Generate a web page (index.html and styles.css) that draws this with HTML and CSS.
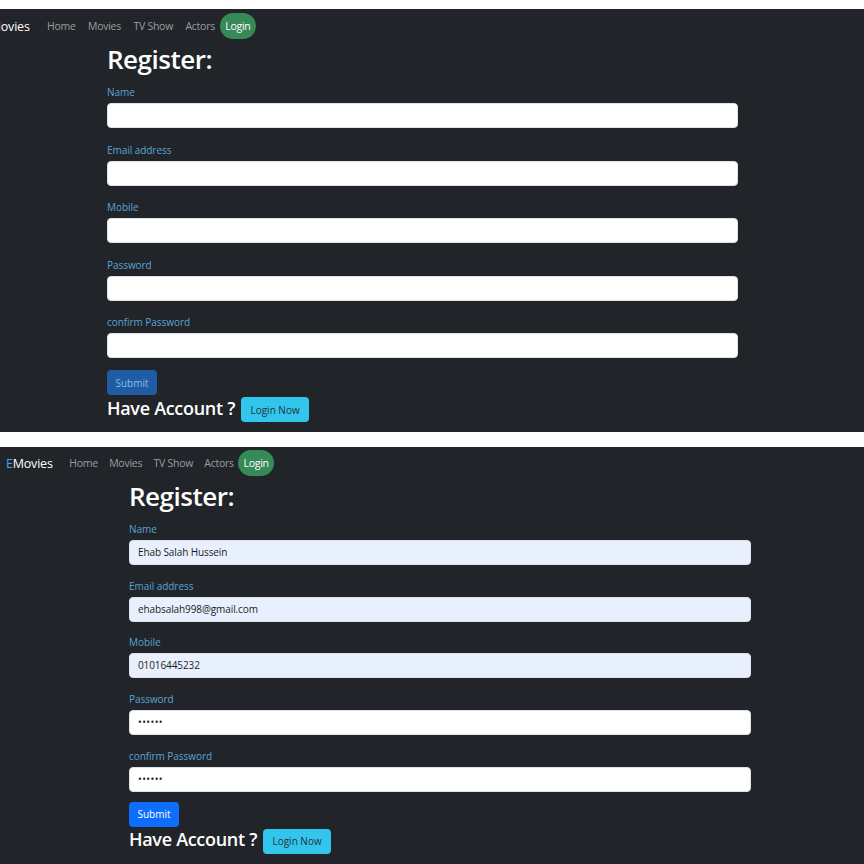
FILE: index.html
```html
<!DOCTYPE html>
<html lang="en">
<head>
<meta charset="utf-8">
<title>EMovies - Register</title>
<link rel="stylesheet" href="styles.css">
</head>
<body>
<section class="shot shot-a">
  <nav class="nav">
    <span class="brand"><span class="brand-e">E</span>Movies</span>
    <a class="nav-link">Home</a>
    <a class="nav-link">Movies</a>
    <a class="nav-link">TV Show</a>
    <a class="nav-link">Actors</a>
    <a class="nav-link nav-login">Login</a>
  </nav>
  <main class="form-wrap">
    <h1 class="title">Register:</h1>
    <div class="group"><label class="label">Name</label><div class="input"></div></div>
    <div class="group"><label class="label">Email address</label><div class="input"></div></div>
    <div class="group"><label class="label">Mobile</label><div class="input"></div></div>
    <div class="group"><label class="label">Password</label><div class="input"></div></div>
    <div class="group last"><label class="label">confirm Password</label><div class="input"></div></div>
    <button class="btn btn-submit disabled">Submit</button>
    <div class="have">
      <span class="have-text">Have Account ?</span>
      <button class="btn btn-login">Login Now</button>
    </div>
  </main>
</section>
<section class="shot shot-b">
  <nav class="nav">
    <span class="brand"><span class="brand-e">E</span>Movies</span>
    <a class="nav-link">Home</a>
    <a class="nav-link">Movies</a>
    <a class="nav-link">TV Show</a>
    <a class="nav-link">Actors</a>
    <a class="nav-link nav-login">Login</a>
  </nav>
  <main class="form-wrap">
    <h1 class="title">Register:</h1>
    <div class="group"><label class="label">Name</label><div class="input filled">Ehab Salah Hussein</div></div>
    <div class="group"><label class="label">Email address</label><div class="input filled">ehabsalah998@gmail.com</div></div>
    <div class="group"><label class="label">Mobile</label><div class="input filled">01016445232</div></div>
    <div class="group"><label class="label">Password</label><div class="input dots">&bull;&bull;&bull;&bull;&bull;&bull;</div></div>
    <div class="group last"><label class="label">confirm Password</label><div class="input dots">&bull;&bull;&bull;&bull;&bull;&bull;</div></div>
    <button class="btn btn-submit">Submit</button>
    <div class="have">
      <span class="have-text">Have Account ?</span>
      <button class="btn btn-login">Login Now</button>
    </div>
  </main>
</section>
</body>
</html>
```
FILE: styles.css
```css
html, body {
  margin: 0;
  padding: 0;
  background: #ffffff;
}
body {
  font-family: "Open Sans", "Noto Sans", "Liberation Sans", sans-serif;
  padding-top: 9px;
}
.shot {
  background: #212529;
  overflow: hidden;
  box-sizing: border-box;
}
.shot-a {
  height: 423px;
  margin-bottom: 15px;
}
.shot-b {
  height: 417px;
}
.nav {
  display: flex;
  align-items: center;
  height: 26px;
  padding-top: 4px;
  padding-left: 6px;
}
.shot-b .nav {
  padding-top: 3px;
}
.shot-a .nav {
  margin-left: -23px;
}
.brand {
  color: #ffffff;
  font-size: 12.5px;
  margin-right: 11px;
  letter-spacing: -0.2px;
}
.brand-e {
  color: #4ea3e0;
}
.nav-link {
  color: #9a9da2;
  font-size: 10.5px;
  padding: 0 5.6px;
  letter-spacing: -0.25px;
}
.shot-a .nav-link {
  padding: 0 6.2px;
}
.nav-login,
.shot-a .nav-login {
  background: #358a57;
  color: #ffffff;
  height: 26px;
  line-height: 26px;
  border-radius: 13px;
  padding: 0 5px;
  margin-left: -1px;
}
.form-wrap {
  padding-left: 129px;
  width: 622px;
}
.shot-a .form-wrap {
  padding-left: 107px;
  width: 631px;
}
.title {
  margin: 4px 0 10px;
  color: #ffffff;
  font-size: 26px;
  font-weight: 600;
  line-height: 32px;
  height: 32px;
  letter-spacing: -0.5px;
}
.shot-a .title {
  margin-top: 4px;
}
.group {
  margin-bottom: 13.7px;
}
.shot-a .group {
  margin-bottom: 14.5px;
}
.group.last {
  margin-bottom: 10px;
}
.shot-a .group.last {
  margin-bottom: 12px;
}
.label {
  display: block;
  color: #5aa3d3;
  font-size: 10px;
  line-height: 14px;
  margin-bottom: 4px;
  letter-spacing: -0.05px;
}
.input {
  box-sizing: border-box;
  height: 25px;
  background: #ffffff;
  border-radius: 4px;
  border: 1px solid #dee2e6;
  font-size: 10px;
  line-height: 23px;
  padding-left: 8px;
  color: #1b1b1b;
  letter-spacing: -0.1px;
}
.input.filled {
  background: #e8f0fe;
}
.input.dots {
  font-size: 10px;
  letter-spacing: 0.4px;
}
.btn {
  font-family: inherit;
  border: none;
  border-radius: 4px;
  height: 25px;
  padding: 0;
  cursor: pointer;
}
.btn-submit {
  display: block;
  width: 50px;
  background: #0d6efd;
  color: #ffffff;
  font-size: 10px;
}
.btn-submit.disabled {
  background: #1f5ca5;
  color: #8bb7e4;
}
.have {
  display: flex;
  align-items: center;
  margin-top: 2px;
  height: 25px;
}
.have-text {
  color: #ffffff;
  font-size: 18px;
  font-weight: 600;
  margin-right: 6px;
  margin-bottom: 4px;
  letter-spacing: -0.3px;
}
.btn-login {
  width: 68px;
  background: #32c6ee;
  color: #2a2f35;
  font-size: 10px;
}
```
